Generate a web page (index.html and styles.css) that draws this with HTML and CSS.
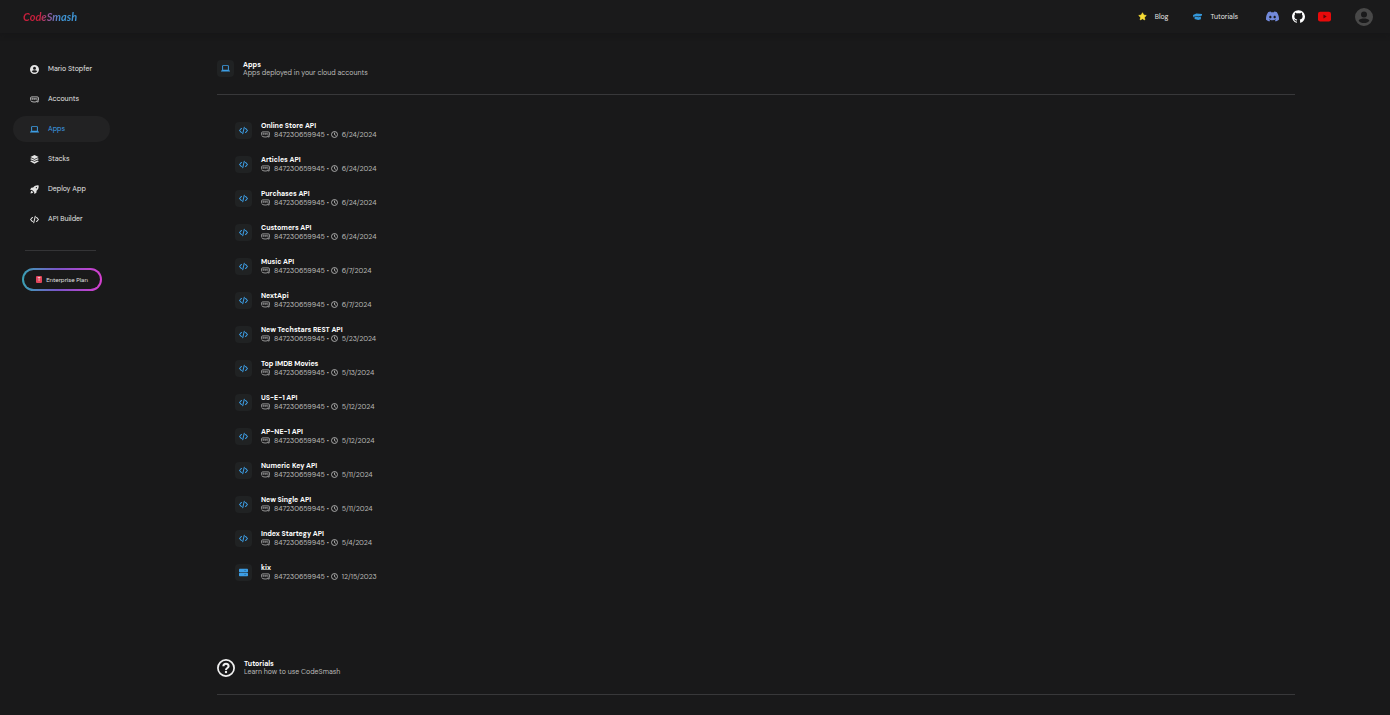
FILE: index.html
```html
<!DOCTYPE html>
<html lang="en">
<head>
<meta charset="UTF-8">
<meta name="viewport" content="width=device-width, initial-scale=1.0">
<title>CodeSmash - Apps</title>
<link rel="stylesheet" href="styles.css">
</head>
<body>

<!-- icon set -->
<svg class="sprite" aria-hidden="true">
  <symbol id="i-user" viewBox="0 0 24 24"><path fill="currentColor" fill-rule="evenodd" d="M12 0a12 12 0 1 0 0 24 12 12 0 0 0 0-24zm0 4.500a4 4 0 1 1 0 8 4 4 0 0 1 0-8zm0 15.500c-3 0-5.800-1.200-7.200-3.500 1-2 4.700-2.500 7.200-2.500s6.200.5 7.200 2.500c-1.400 2.300-4.200 3.500-7.200 3.500z"/></symbol>
  <symbol id="i-aws" viewBox="0 0 24 24"><g fill="none" stroke="currentColor" stroke-width="2"><path d="M1.500 13V8c0-2 1-3 3-3h15c2 0 3 1 3 3v7"/><path stroke-width="1.500" d="M5 12V9.500c0-1.500 3-1.500 3 0V12M5 11h3M10 8.500l1.200 3.500 1.200-3 1.200 3L15 8.500M19.500 8.500c-3-.5-2.500 1.500-1 1.500s1.500 2.500-1.500 1.800"/><path d="M1.500 15c3 5 16 4.500 18 1.500M17.500 16h4.500l-1.500 4"/></g></symbol>
  <symbol id="i-laptop" viewBox="0 0 24 24"><path fill="currentColor" fill-rule="evenodd" d="M3 5c0-1.100.9-2 2-2h14c1.100 0 2 .9 2 2v12H3zm2.600.6v9.400h12.800V5.600zM0 17h24v3H0z"/></symbol>
  <symbol id="i-stack" viewBox="0 0 24 24"><path fill="currentColor" d="M12 0l11 5.200-11 5.200L1 5.200zM1 10l3-1.300 8 3.700 8-3.700 3 1.300v1l-11 5-11-5zM1 16l3-1.500 8 3.700 8-3.700 3 1.500v1.500L12 23 1 17.500z"/></symbol>
  <symbol id="i-rocket" viewBox="0 0 24 24"><path fill="currentColor" fill-rule="evenodd" d="M23 1c-6-.8-11 1.300-14.500 5.500L3.500 7 0 12.500l5.500.5 5.500 5.500.7 5.500 5.300-3.500.5-5C21.700 12 24 7 23 1zM17 5.200a1.800 1.800 0 1 1 0 3.600 1.800 1.800 0 0 1 0-3.600zM4.500 15.500c-2 .8-2.800 3.200-3 7 3.800-.2 6.200-1 7-3z"/></symbol>
  <symbol id="i-code" viewBox="0 0 24 24"><path fill="none" stroke="currentColor" stroke-width="2.800" stroke-linecap="round" stroke-linejoin="round" d="M6.500 6.500L1.500 12l5 5.500M17.500 6.500l5 5.500-5 5.500M14 3.500l-4 17"/></symbol>
  <symbol id="i-clock" viewBox="0 0 24 24"><g fill="none" stroke="currentColor" stroke-width="3"><circle cx="12" cy="12" r="10.200"/><path d="M12 5.500v7l4.500 2.500"/></g></symbol>
  <symbol id="i-server" viewBox="0 0 24 24"><rect x="0" y="2" width="24" height="9.200" rx="2" fill="currentColor"/><rect x="0" y="12.800" width="24" height="9.200" rx="2" fill="currentColor"/><path stroke="#1b5f92" stroke-width="1.500" d="M14 6.500h5M14 17.500h5"/></symbol>
  <symbol id="i-help" viewBox="0 0 24 24"><circle cx="12" cy="12" r="10.800" fill="none" stroke="currentColor" stroke-width="2.300"/><path fill="none" stroke="currentColor" stroke-width="2.700" d="M8.500 9.800c0-4.500 7-4.500 7 0 0 2.200-3.500 2.200-3.500 4.700"/><circle cx="12" cy="17.300" r="1.600" fill="currentColor"/></symbol>
  <symbol id="i-star" viewBox="0 0 24 24"><path fill="currentColor" stroke="currentColor" stroke-width="2" stroke-linejoin="round" d="M12 2l3.100 6.300 6.900 1-5 4.900 1.200 6.800L12 17.800 5.800 21 7 14.200 2 9.300l6.900-1z"/></symbol>
  <symbol id="i-cap" viewBox="0 0 24 24"><path fill="currentColor" d="M0 8l9-4 15 1v4l-9 3L4 10.500V14H1zM5 12l10 2 6-2v7l-7 2-10-2.500z"/></symbol>
  <symbol id="i-discord" viewBox="0 0 24 24"><path fill="currentColor" d="M20.317 4.370a19.791 19.791 0 0 0-4.885-1.515.074.074 0 0 0-.079.037c-.21.375-.444.865-.608 1.250a18.270 18.270 0 0 0-5.487 0 12.640 12.640 0 0 0-.617-1.250.077.077 0 0 0-.079-.037A19.736 19.736 0 0 0 3.677 4.370a.07.07 0 0 0-.032.027C.533 9.046-.32 13.580.099 18.058a.082.082 0 0 0 .031.057 19.900 19.900 0 0 0 5.993 3.030.078.078 0 0 0 .084-.028c.462-.63.874-1.295 1.226-1.994a.076.076 0 0 0-.041-.106 13.107 13.107 0 0 1-1.872-.892.077.077 0 0 1-.008-.128c.126-.094.252-.192.372-.291a.074.074 0 0 1 .077-.01c3.928 1.793 8.180 1.793 12.062 0a.074.074 0 0 1 .078.009c.12.099.246.198.373.292a.077.077 0 0 1-.006.127 12.299 12.299 0 0 1-1.873.892.077.077 0 0 0-.041.107c.36.698.772 1.362 1.225 1.993a.076.076 0 0 0 .084.028 19.839 19.839 0 0 0 6.002-3.030.077.077 0 0 0 .032-.054c.5-5.177-.838-9.674-3.549-13.660a.061.061 0 0 0-.031-.03zM8.020 15.330c-1.183 0-2.157-1.085-2.157-2.419 0-1.333.956-2.419 2.157-2.419 1.210 0 2.176 1.096 2.157 2.420 0 1.333-.956 2.418-2.157 2.418zm7.975 0c-1.183 0-2.157-1.085-2.157-2.419 0-1.333.955-2.419 2.157-2.419 1.210 0 2.176 1.096 2.157 2.420 0 1.333-.946 2.418-2.157 2.418z"/></symbol>
  <symbol id="i-github" viewBox="0 0 24 24"><path fill="currentColor" d="M12 .297c-6.630 0-12 5.373-12 12 0 5.303 3.438 9.800 8.205 11.385.6.113.82-.258.82-.577 0-.285-.01-1.040-.015-2.040-3.338.724-4.042-1.610-4.042-1.610C4.422 18.070 3.633 17.700 3.633 17.700c-1.087-.744.084-.729.084-.729 1.205.084 1.838 1.236 1.838 1.236 1.070 1.835 2.809 1.305 3.495.998.108-.776.417-1.305.76-1.605-2.665-.3-5.466-1.332-5.466-5.930 0-1.310.465-2.380 1.235-3.220-.135-.303-.54-1.523.105-3.176 0 0 1.005-.322 3.300 1.230.96-.267 1.980-.399 3-.405 1.020.006 2.040.138 3 .405 2.280-1.552 3.285-1.230 3.285-1.230.645 1.653.24 2.873.12 3.176.765.840 1.230 1.910 1.230 3.220 0 4.610-2.805 5.625-5.475 5.920.42.360.81 1.096.81 2.220 0 1.606-.015 2.896-.015 3.286 0 .315.210.690.825.570C20.565 22.092 24 17.592 24 12.297c0-6.627-5.373-12-12-12"/></symbol>
  <symbol id="i-youtube" viewBox="0 0 24 24"><rect x="0" y="3" width="24" height="18" rx="4" fill="currentColor"/><path fill="#5a0808" d="M10 8.500l6 3.500-6 3.500z"/></symbol>
</svg>

<header class="topbar">
  <a class="logo" href="#">CodeSmash</a>
  <nav class="toplinks">
    <a class="toplink blog" href="#"><svg class="icon"><use href="#i-star"/></svg>Blog</a>
    <a class="toplink tutorials" href="#"><svg class="icon"><use href="#i-cap"/></svg>Tutorials</a>
    <div class="social">
      <a class="discord" href="#" aria-label="Discord"><svg><use href="#i-discord"/></svg></a>
      <a class="github" href="#" aria-label="GitHub"><svg><use href="#i-github"/></svg></a>
      <a class="youtube" href="#" aria-label="YouTube"><svg><use href="#i-youtube"/></svg></a>
    </div>
    <button class="avatar" aria-label="Profile"><svg><use href="#i-user"/></svg></button>
  </nav>
</header>

<div class="layout">
  <aside class="sidebar">
    <nav class="menu">
      <a class="menu-item" href="#"><svg class="icon"><use href="#i-user"/></svg>Mario Stopfer</a>
      <a class="menu-item" href="#"><svg class="icon"><use href="#i-aws"/></svg>Accounts</a>
      <a class="menu-item active" href="#"><svg class="icon"><use href="#i-laptop"/></svg>Apps</a>
      <a class="menu-item" href="#"><svg class="icon"><use href="#i-stack"/></svg>Stacks</a>
      <a class="menu-item" href="#"><svg class="icon"><use href="#i-rocket"/></svg>Deploy App</a>
      <a class="menu-item" href="#"><svg class="icon"><use href="#i-code"/></svg>API Builder</a>
    </nav>
    <hr class="menu-line">
    <button class="plan"><span class="plan-badge">T</span>Enterprise Plan</button>
  </aside>

  <main class="content">
    <section>
      <div class="section-head">
        <span class="tile"><svg class="icon"><use href="#i-laptop"/></svg></span>
        <div>
          <h2>Apps</h2>
          <p>Apps deployed in your cloud accounts</p>
        </div>
      </div>
      <ul class="apps" id="apps"></ul>
    </section>

    <section>
      <div class="section-head">
        <svg class="help"><use href="#i-help"/></svg>
        <div>
          <h2>Tutorials</h2>
          <p>Learn how to use CodeSmash</p>
        </div>
      </div>
    </section>
  </main>
</div>

<script>
const apps = [
  { name: "Online Store API", date: "6/24/2024" },
  { name: "Articles API", date: "6/24/2024" },
  { name: "Purchases API", date: "6/24/2024" },
  { name: "Customers API", date: "6/24/2024" },
  { name: "Music API", date: "6/7/2024" },
  { name: "NextApi", date: "6/7/2024" },
  { name: "New Techstars REST API", date: "5/23/2024" },
  { name: "Top IMDB Movies", date: "5/13/2024" },
  { name: "US-E-1 API", date: "5/12/2024" },
  { name: "AP-NE-1 API", date: "5/12/2024" },
  { name: "Numeric Key API", date: "5/11/2024" },
  { name: "New Single API", date: "5/11/2024" },
  { name: "Index Startegy API", date: "5/4/2024" },
  { name: "kix", date: "12/15/2023", icon: "server" },
];

document.getElementById("apps").innerHTML = apps.map((app) => `
  <li class="app">
    <span class="tile"><svg class="icon"><use href="#i-${app.icon || "code"}"/></svg></span>
    <div>
      <h3>${app.name}</h3>
      <div class="meta">
        <svg class="icon"><use href="#i-aws"/></svg>
        <span class="account">847230659945</span>
        <span class="dot">•</span>
        <svg class="clock"><use href="#i-clock"/></svg>
        <span>${app.date}</span>
      </div>
    </div>
  </li>`).join("");
</script>
</body>
</html>
```
FILE: styles.css
```css
* {
  box-sizing: border-box;
}
body {
  margin: 0;
  background: #19191a;
  color: #e4e4e4;
  font-family: "DM Sans", Inter, "Liberation Sans", sans-serif;
  font-size: 7px;
  line-height: 8px;
}
a {
  color: inherit;
  text-decoration: none;
}
button {
  font: inherit;
  color: inherit;
  background: none;
  border: none;
  padding: 0;
  cursor: pointer;
}
h2, h3, p, ul {
  margin: 0;
  padding: 0;
}
svg {
  display: block;
  flex: none;
}
.sprite {
  position: absolute;
  width: 0;
  height: 0;
}
.icon {
  width: 9px;
  height: 9px;
}

/* top bar */
.topbar {
  display: flex;
  align-items: center;
  justify-content: space-between;
  height: 33px;
  padding: 0 17px 0 23px;
  background: #1a1a1b;
  box-shadow: 0 1px 5px #161617;
}
.logo {
  font-family: Lato, sans-serif;
  font-size: 11px;
  font-style: italic;
  font-weight: 700;
  line-height: 14px;
  color: transparent;
  background: linear-gradient(90deg, #c81f3c 30%, #8c5ba0 50%, #3e93d2 70%);
  background-clip: text;
  -webkit-background-clip: text;
}
.toplinks {
  display: flex;
  align-items: center;
}
.toplink {
  display: flex;
  align-items: center;
  gap: 8px;
  margin-right: 25px;
}
.toplink.tutorials {
  margin-right: 28px;
}
.blog .icon {
  color: #f7dc35;
}
.tutorials .icon {
  color: #3498db;
}
.social {
  display: flex;
  gap: 13px;
  margin-right: 24px;
}
.social svg {
  width: 13px;
  height: 13px;
}
.discord {
  color: #7289da;
}
.github {
  color: #fff;
}
.youtube {
  color: #e80a0a;
}
.avatar {
  color: #484848;
}
.avatar svg {
  width: 18px;
  height: 18px;
}

/* sidebar */
.layout {
  display: flex;
}
.sidebar {
  flex: none;
  width: 217px;
  padding: 23px 0 0 13px;
}
.menu {
  display: flex;
  flex-direction: column;
  gap: 4px;
  width: 97px;
}
.menu-item {
  display: flex;
  align-items: center;
  gap: 9px;
  height: 26px;
  padding-left: 17px;
  border-radius: 13px;
}
.menu-item.active {
  background: #222223;
  color: #3d9ee5;
}
.menu-line {
  width: 71px;
  margin: 18px 0 17px 12px;
  border: none;
  border-top: 1px solid #343436;
}
.plan {
  display: flex;
  align-items: center;
  justify-content: center;
  gap: 4px;
  width: 80px;
  height: 23px;
  margin-left: 9px;
  border: 2px solid transparent;
  border-radius: 12px;
  background: linear-gradient(#19191a, #19191a) padding-box,
    linear-gradient(90deg, #3aa0b4, #7a55c8 45%, #d53fd0) border-box;
  font-size: 6px;
}
.plan-badge {
  width: 6px;
  height: 7px;
  border-radius: 1px;
  background: #e2445a;
  color: #fff;
  font-size: 5px;
  line-height: 7px;
}

/* content */
.content {
  flex: 1;
  margin-right: 95px;
  padding-top: 27px;
}
.section-head {
  display: flex;
  align-items: center;
  gap: 9px;
  padding-bottom: 17px;
  border-bottom: 1px solid #38383a;
}
h2, h3 {
  font-size: 7px;
  font-weight: 700;
  color: #fff;
}
.section-head p {
  color: #b9b9b9;
}
.tile {
  display: flex;
  flex: none;
  align-items: center;
  justify-content: center;
  width: 17px;
  height: 17px;
  border-radius: 4px;
  background: #202223;
  color: #3d9ee5;
}
.help {
  width: 18px;
  height: 18px;
  color: #f0f0f0;
}
.apps {
  display: flex;
  flex-direction: column;
  gap: 17px;
  padding: 27px 18px 78px;
  list-style: none;
}
.app {
  display: flex;
  align-items: center;
  gap: 9px;
}
.meta {
  display: flex;
  align-items: center;
  color: #b9b9b9;
}
.account {
  margin-left: 4px;
}
.dot {
  margin: 0 2px;
  font-size: 6px;
}
.clock {
  width: 7px;
  height: 7px;
  margin-right: 4px;
}
```
